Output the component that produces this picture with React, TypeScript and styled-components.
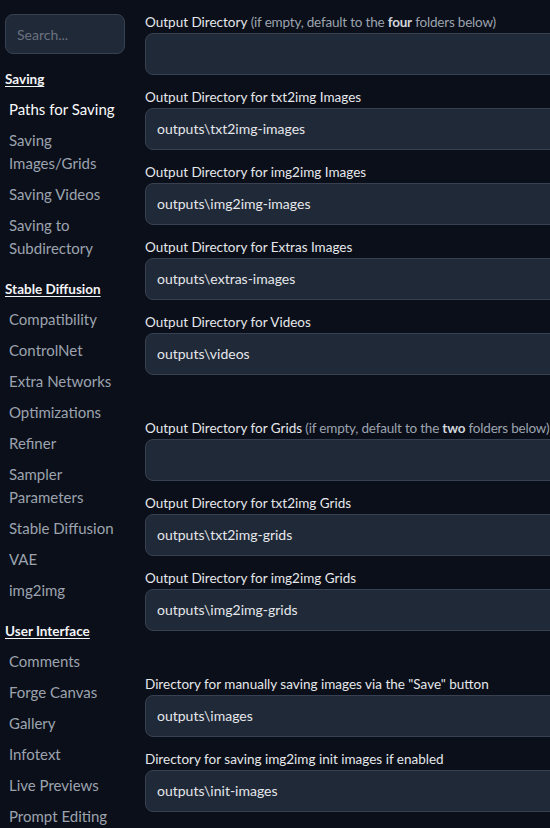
import React from "react";
import styled, { createGlobalStyle } from "styled-components";

const GlobalStyle = createGlobalStyle`
  html, body {
    margin: 0;
    padding: 0;
    background: #0b0f19;
    overflow: hidden;
  }
  body {
    font-family: "Lato", "Noto Sans", sans-serif;
    color: #e5e7eb;
  }
`;

type NavSection = {
  title: string;
  items: string[];
};

type Field = {
  label: string;
  note?: React.ReactNode;
  value: string;
  spaced?: boolean;
};

const sections: NavSection[] = [
  {
    title: "Saving",
    items: ["Paths for Saving", "Saving Images/Grids", "Saving Videos", "Saving to Subdirectory"],
  },
  {
    title: "Stable Diffusion",
    items: [
      "Compatibility",
      "ControlNet",
      "Extra Networks",
      "Optimizations",
      "Refiner",
      "Sampler Parameters",
      "Stable Diffusion",
      "VAE",
      "img2img",
    ],
  },
  {
    title: "User Interface",
    items: ["Comments", "Forge Canvas", "Gallery", "Infotext", "Live Previews", "Prompt Editing"],
  },
];

const fields: Field[] = [
  {
    label: "Output Directory",
    note: (
      <>
        (if empty, default to the <b>four</b> folders below)
      </>
    ),
    value: "",
  },
  { label: "Output Directory for txt2img Images", value: "outputs\\txt2img-images" },
  { label: "Output Directory for img2img Images", value: "outputs\\img2img-images" },
  { label: "Output Directory for Extras Images", value: "outputs\\extras-images" },
  { label: "Output Directory for Videos", value: "outputs\\videos" },
  {
    label: "Output Directory for Grids",
    note: (
      <>
        (if empty, default to the <b>two</b> folders below)
      </>
    ),
    value: "",
    spaced: true,
  },
  { label: "Output Directory for txt2img Grids", value: "outputs\\txt2img-grids" },
  { label: "Output Directory for img2img Grids", value: "outputs\\img2img-grids" },
  {
    label: 'Directory for manually saving images via the "Save" button',
    value: "outputs\\images",
    spaced: true,
  },
  { label: "Directory for saving img2img init images if enabled", value: "outputs\\init-images" },
];

export default function App(): JSX.Element {
  return (
    <Page>
      <GlobalStyle />
      <Sidebar>
        <Search placeholder="Search..." />
        {sections.map((section) => (
          <NavGroup key={section.title}>
            <NavTitle>{section.title}</NavTitle>
            {section.items.map((item) => (
              <NavItem key={item} $active={item === "Paths for Saving"}>
                {item}
              </NavItem>
            ))}
          </NavGroup>
        ))}
      </Sidebar>
      <Content>
        {fields.map((field) => (
          <Row key={field.label} $spaced={!!field.spaced}>
            <Label>
              {field.label}
              {field.note && <Note> {field.note}</Note>}
            </Label>
            <TextBox defaultValue={field.value} />
          </Row>
        ))}
      </Content>
    </Page>
  );
}

const Page = styled.div({
  display: "flex",
  flexDirection: "row",
  alignItems: "flex-start",
  width: 700,
  height: 828,
  overflow: "hidden",
});

const Sidebar = styled.nav({
  width: 140,
  flexShrink: 0,
  paddingTop: 14,
  paddingLeft: 5,
  boxSizing: "border-box",
  display: "flex",
  flexDirection: "column",
});

const Search = styled.input({
  width: 120,
  height: 40,
  boxSizing: "border-box",
  padding: "0 11px",
  background: "#1f2937",
  border: "1px solid #374151",
  borderRadius: 8,
  color: "#e5e7eb",
  font: "14px Lato, sans-serif",
  outline: "none",
  "&::placeholder": {
    color: "#6b7280",
  },
});

const NavGroup = styled.div({
  marginTop: 15,
  display: "flex",
  flexDirection: "column",
});

const NavTitle = styled.div({
  fontSize: 13.5,
  lineHeight: "20px",
  fontWeight: 700,
  color: "#f3f4f6",
  textDecoration: "underline",
  textUnderlineOffset: 2,
  marginBottom: 5,
});

const NavItem = styled.div<{ $active: boolean }>(({ $active }) => ({
  fontSize: 15,
  lineHeight: "23px",
  padding: "4px 4px",
  width: 118,
  color: $active ? "#f9fafb" : "#9ca3af",
}));

const Content = styled.main({
  flex: 1,
  paddingTop: 13,
  paddingLeft: 5,
  display: "flex",
  flexDirection: "column",
  gap: 13,
});

const Row = styled.div<{ $spaced: boolean }>(({ $spaced }) => ({
  display: "flex",
  flexDirection: "column",
  gap: 2,
  marginTop: $spaced ? 31 : 0,
}));

const Label = styled.label({
  fontSize: 13.5,
  lineHeight: "18px",
  color: "#e5e7eb",
  whiteSpace: "nowrap",
});

const Note = styled.span({
  color: "#9ca3af",
  letterSpacing: "-0.2px",
  "& b": {
    color: "#d1d5db",
    fontWeight: 700,
  },
});

const TextBox = styled.input({
  height: 42,
  boxSizing: "border-box",
  width: "100%",
  padding: "0 11px 2px",
  background: "#1f2937",
  border: "1px solid #374151",
  borderRadius: 8,
  color: "#e5e7eb",
  font: "14px Lato, sans-serif",
  outline: "none",
});
